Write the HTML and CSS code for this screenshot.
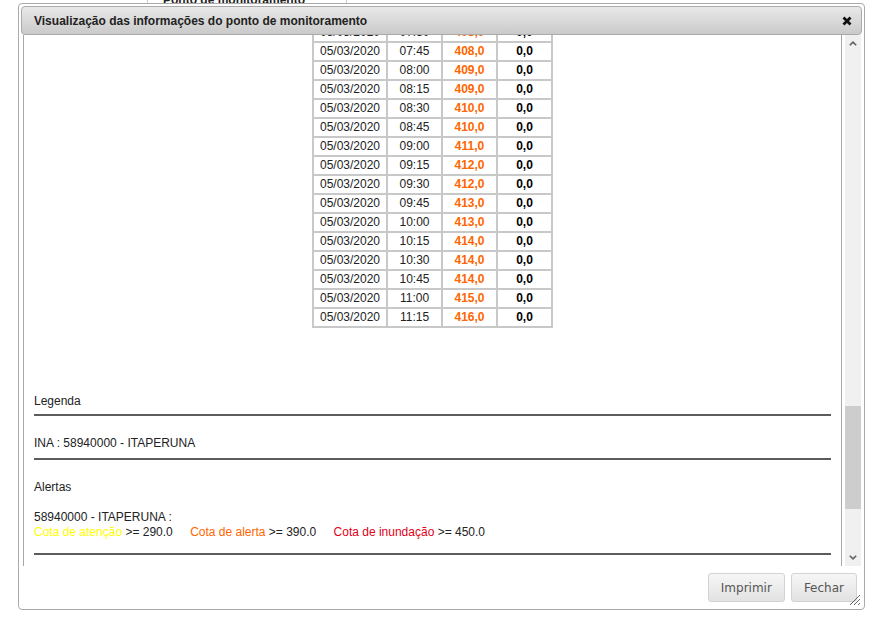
FILE: index.html
```html
<!DOCTYPE html>
<html lang="pt-BR">
  <head>
    <meta charset="UTF-8" />
    <meta name="viewport" content="width=device-width, initial-scale=1.0" />
    <title>Visualização das informações do ponto de monitoramento</title>
    <link rel="stylesheet" href="styles.css">
  </head>
  <body>
    <div class="page-head">Ponto de monitoramento</div>

    <div class="dialog">
      <div class="dialog-titlebar">
        <span class="dialog-title">Visualização das informações do ponto de monitoramento</span>
        <span class="dialog-close">
          <svg width="10" height="10" viewBox="0 0 10 10">
            <path d="M1.5 1.5 L8.5 8.5 M8.5 1.5 L1.5 8.5" stroke="#111" stroke-width="2.8" />
          </svg>
        </span>
      </div>

      <div class="dialog-content">
        <div class="viewport" id="viewport">
          <div class="info-box">
            <table class="dados">
              <tr><td class="col-data">05/03/2020</td><td class="col">06:30</td><td class="col val">404,0</td><td class="col zero">0,0</td></tr>
              <tr><td class="col-data">05/03/2020</td><td class="col">06:45</td><td class="col val">405,0</td><td class="col zero">0,0</td></tr>
              <tr><td class="col-data">05/03/2020</td><td class="col">07:00</td><td class="col val">406,0</td><td class="col zero">0,0</td></tr>
              <tr><td class="col-data">05/03/2020</td><td class="col">07:15</td><td class="col val">407,0</td><td class="col zero">0,0</td></tr>
              <tr><td class="col-data">05/03/2020</td><td class="col">07:30</td><td class="col val">408,0</td><td class="col zero">0,0</td></tr>
              <tr id="firstRow"><td class="col-data">05/03/2020</td><td class="col">07:45</td><td class="col val">408,0</td><td class="col zero">0,0</td></tr>
              <tr><td class="col-data">05/03/2020</td><td class="col">08:00</td><td class="col val">409,0</td><td class="col zero">0,0</td></tr>
              <tr><td class="col-data">05/03/2020</td><td class="col">08:15</td><td class="col val">409,0</td><td class="col zero">0,0</td></tr>
              <tr><td class="col-data">05/03/2020</td><td class="col">08:30</td><td class="col val">410,0</td><td class="col zero">0,0</td></tr>
              <tr><td class="col-data">05/03/2020</td><td class="col">08:45</td><td class="col val">410,0</td><td class="col zero">0,0</td></tr>
              <tr><td class="col-data">05/03/2020</td><td class="col">09:00</td><td class="col val">411,0</td><td class="col zero">0,0</td></tr>
              <tr><td class="col-data">05/03/2020</td><td class="col">09:15</td><td class="col val">412,0</td><td class="col zero">0,0</td></tr>
              <tr><td class="col-data">05/03/2020</td><td class="col">09:30</td><td class="col val">412,0</td><td class="col zero">0,0</td></tr>
              <tr><td class="col-data">05/03/2020</td><td class="col">09:45</td><td class="col val">413,0</td><td class="col zero">0,0</td></tr>
              <tr><td class="col-data">05/03/2020</td><td class="col">10:00</td><td class="col val">413,0</td><td class="col zero">0,0</td></tr>
              <tr><td class="col-data">05/03/2020</td><td class="col">10:15</td><td class="col val">414,0</td><td class="col zero">0,0</td></tr>
              <tr><td class="col-data">05/03/2020</td><td class="col">10:30</td><td class="col val">414,0</td><td class="col zero">0,0</td></tr>
              <tr><td class="col-data">05/03/2020</td><td class="col">10:45</td><td class="col val">414,0</td><td class="col zero">0,0</td></tr>
              <tr><td class="col-data">05/03/2020</td><td class="col">11:00</td><td class="col val">415,0</td><td class="col zero">0,0</td></tr>
              <tr><td class="col-data">05/03/2020</td><td class="col">11:15</td><td class="col val">416,0</td><td class="col zero">0,0</td></tr>
            </table>

            <div class="legenda-titulo">Legenda</div>
            <div class="sep sep-legenda"></div>
            <div class="legenda-ina">INA : 58940000 - ITAPERUNA</div>
            <div class="sep sep-ina"></div>
            <div class="alertas-titulo">Alertas</div>
            <div class="alertas-ponto">58940000 - ITAPERUNA :</div>
            <div class="alertas-cotas">
              <span class="cota-atencao">Cota de atenção</span> &gt;= 290.0
              <span class="cota-alerta">Cota de alerta</span> &gt;= 390.0
              <span class="cota-inundacao">Cota de inundação</span> &gt;= 450.0
            </div>
            <div class="sep sep-alertas"></div>
          </div>
        </div>

        <div class="scrollbar">
          <div class="sb-arrow">
            <svg width="8" height="5" viewBox="0 0 8 5"><path d="M0.8 4.3 L4 1.2 L7.2 4.3" fill="none" stroke="#606060" stroke-width="1.6" /></svg>
          </div>
          <div class="sb-track"><div class="sb-thumb"></div></div>
          <div class="sb-arrow">
            <svg width="8" height="5" viewBox="0 0 8 5"><path d="M0.8 0.7 L4 3.8 L7.2 0.7" fill="none" stroke="#606060" stroke-width="1.6" /></svg>
          </div>
        </div>
      </div>

      <div class="dialog-buttons">
        <button type="button">Imprimir</button>
        <button type="button">Fechar</button>
      </div>

      <svg class="resize-handle" width="12" height="12" viewBox="0 0 12 12">
        <path d="M11 1 L1 11 M11 5 L5 11 M11 9 L9 11" stroke="#666" stroke-width="1" />
      </svg>
    </div>

    <script>
      // keep the dialog scrolled to the same reading as the screen
      var viewport = document.getElementById("viewport");
      var firstRow = document.getElementById("firstRow");
      viewport.scrollTop =
        firstRow.getBoundingClientRect().top -
        viewport.getBoundingClientRect().top -
        7;
    </script>
  </body>
</html>
```

FILE: styles.css
```css
body {
  margin: 0;
  font-family: "Liberation Sans", Arial, sans-serif;
  font-size: 12px;
  color: #222;
  background-color: #fff;
}

.page-head {
  margin: -7px 0 0 147px;
  width: 183px;
  height: 30px;
  padding-left: 15px;
  border-left: 1px solid #ccc;
  border-right: 1px solid #ccc;
  font-weight: bold;
  line-height: 15px;
}

.dialog {
  position: absolute;
  left: 18px;
  top: 3px;
  width: 847px;
  height: 607px;
  box-sizing: border-box;
  padding: 2px;
  border: 1px solid #aaa;
  border-radius: 4px;
  background-color: #fff;
  display: flex;
  flex-direction: column;
}

.dialog-titlebar {
  height: 29px;
  box-sizing: border-box;
  padding: 0 9px 0 12px;
  border: 1px solid #aaa;
  border-radius: 4px;
  background: linear-gradient(#e9e9e9, #cacaca);
  display: flex;
  align-items: center;
  justify-content: space-between;
}

.dialog-title {
  font-weight: bold;
  color: #222;
}

.dialog-close {
  display: flex;
  margin-top: 1px;
}

.dialog-content {
  height: 531px;
  padding-left: 2px;
  display: flex;
}

.viewport {
  flex: 1;
  overflow: hidden;
}

.info-box {
  padding: 10px 10px 30px;
  border-left: 1px solid #a8a8a8;
  border-right: 1px solid #a8a8a8;
}

.dados {
  margin: 0 auto;
  border-collapse: collapse;
  border: 2px solid #c8c8c8;
}

.dados td {
  height: 17px;
  padding: 0;
  border: 2px solid #c8c8c8;
  text-align: center;
  line-height: 15px;
}

.dados .col-data {
  width: 72px;
}

.dados .col {
  width: 53px;
}

.dados .val {
  color: #ff6600;
  font-weight: bold;
}

.dados .zero {
  color: #000;
  font-weight: bold;
}

.legenda-titulo,
.legenda-ina,
.alertas-titulo,
.alertas-ponto,
.alertas-cotas {
  line-height: 15px;
}

.legenda-titulo {
  margin-top: 66px;
}

.sep {
  height: 2px;
  background-color: #5c5c5c;
}

.sep-legenda {
  margin-top: 5px;
}

.legenda-ina {
  margin-top: 20px;
}

.sep-ina {
  margin-top: 7px;
}

.alertas-titulo {
  margin-top: 20px;
}

.alertas-ponto {
  margin-top: 15px;
}

.alertas-cotas span {
  margin-left: 14px;
}

.alertas-cotas span:first-child {
  margin-left: 0;
}

.cota-atencao {
  color: #ffff00;
}

.cota-alerta {
  color: #ff6600;
}

.cota-inundacao {
  color: #e2001a;
}

.sep-alertas {
  margin-top: 13px;
}

.scrollbar {
  width: 16px;
  margin: 0 1px 0 3px;
  background-color: #f0f0f0;
  display: flex;
  flex-direction: column;
}

.sb-arrow {
  height: 17px;
  display: flex;
  align-items: center;
  justify-content: center;
}

.sb-track {
  flex: 1;
}

.sb-thumb {
  margin-top: 354px;
  height: 103px;
  background-color: #cdcdcd;
}

.dialog-buttons {
  flex: 1;
  padding: 7px 5px 0 0;
  display: flex;
  justify-content: flex-end;
  align-items: flex-start;
  gap: 6px;
}

button {
  height: 29px;
  padding: 0 12px;
  font-family: "DejaVu Sans", Verdana, sans-serif;
  font-size: 12px;
  color: #555;
  border: 1px solid #d3d3d3;
  border-radius: 3px;
  background: linear-gradient(#f6f6f6, #e2e2e2);
}

.resize-handle {
  position: absolute;
  right: 3px;
  bottom: 3px;
}
```
